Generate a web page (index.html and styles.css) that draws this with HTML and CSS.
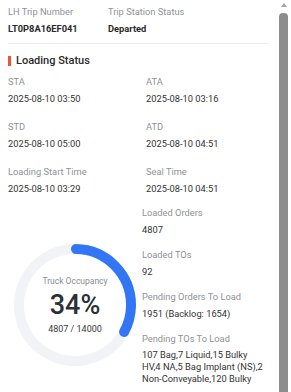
FILE: index.html
```html
<!DOCTYPE html>
<html>
<head>
<meta charset="utf-8">
<link rel="stylesheet" href="styles.css">
</head>
<body>
<div class="page">
  <div class="content">
    <div class="head-grid">
      <div class="field">
        <div class="label">LH Trip Number</div>
        <div class="value strong">LT0P8A16EF041</div>
      </div>
      <div class="field">
        <div class="label">Trip Station Status</div>
        <div class="value strong">Departed</div>
      </div>
    </div>
    <div class="divider"></div>
    <div class="section-title"><span class="mark"></span>Loading Status</div>
    <div class="time-grid">
      <div class="field"><div class="label">STA</div><div class="value">2025-08-10 03:50</div></div>
      <div class="field"><div class="label">ATA</div><div class="value">2025-08-10 03:16</div></div>
      <div class="field"><div class="label">STD</div><div class="value">2025-08-10 05:00</div></div>
      <div class="field"><div class="label">ATD</div><div class="value">2025-08-10 04:51</div></div>
      <div class="field"><div class="label">Loading Start Time</div><div class="value">2025-08-10 03:29</div></div>
      <div class="field"><div class="label">Seal Time</div><div class="value">2025-08-10 04:51</div></div>
    </div>
    <div class="lower">
      <div class="gauge-col">
        <div class="gauge">
          <svg width="122" height="122" viewBox="0 0 122 122">
            <circle class="track" cx="61" cy="61" r="56" stroke-dasharray="237 400" transform="rotate(34 61 61)"></circle>
            <circle class="bar" cx="61" cy="61" r="56" stroke-dasharray="115 400" transform="rotate(-89 61 61)"></circle>
          </svg>
          <div class="gauge-text">
            <div class="g-label">Truck Occupancy</div>
            <div class="g-pct">34%</div>
            <div class="g-count">4807 / 14000</div>
          </div>
        </div>
      </div>
      <div class="list">
        <div class="field"><div class="label">Loaded Orders</div><div class="value">4807</div></div>
        <div class="field"><div class="label">Loaded TOs</div><div class="value">92</div></div>
        <div class="field"><div class="label">Pending Orders To Load</div><div class="value">1951 (Backlog: 1654)</div></div>
        <div class="field"><div class="label">Pending TOs To Load</div><div class="value multi">107 Bag,7 Liquid,15 Bulky<br>HV,4 NA,5 Bag Implant (NS),2<br>Non-Conveyable,120 Bulky</div></div>
      </div>
    </div>
  </div>
  <div class="scrollbar">
    <div class="arrow"></div>
    <div class="thumb"></div>
  </div>
</div>
</body>
</html>
```
FILE: styles.css
```css
html, body {
  margin: 0;
  padding: 0;
  background: #ffffff;
}
body {
  font-family: Roboto, "Liberation Sans", sans-serif;
  font-size: 9.3px;
  color: #333333;
  height: 392px;
  overflow: hidden;
}
.page {
  display: flex;
  height: 392px;
}
.content {
  flex: 1;
  padding: 5px 8px 0 8px;
  min-width: 0;
}
.label {
  color: #8f9298;
  line-height: 14px;
}
.value {
  color: #333333;
  line-height: 14px;
  margin-top: 3px;
}
.value.strong {
  font-weight: 700;
  color: #2a2a2a;
}
.head-grid {
  display: grid;
  grid-template-columns: 100px 1fr;
}
.divider {
  height: 1px;
  background: #e9eaec;
  margin-top: 7px;
}
.section-title {
  display: flex;
  align-items: center;
  gap: 5px;
  margin-top: 9px;
  font-size: 11px;
  line-height: 16px;
  font-weight: 500;
  color: #2b2b2b;
}
.mark {
  width: 3px;
  height: 10px;
  background: #f0532d;
}
.time-grid {
  display: grid;
  grid-template-columns: 138px 1fr;
  row-gap: 14px;
  margin-top: 6px;
}
.lower {
  display: flex;
  margin-top: 10px;
}
.gauge-col {
  width: 134px;
  flex: none;
  display: flex;
  justify-content: center;
  padding-top: 38px;
  margin-left: -8px;
  padding-left: 8px;
}
.gauge {
  position: relative;
  width: 122px;
  height: 122px;
}
.gauge svg {
  display: block;
}
.track {
  fill: none;
  stroke: #f2f3f7;
  stroke-width: 10;
}
.bar {
  fill: none;
  stroke: #3275f5;
  stroke-width: 10;
  stroke-linecap: round;
}
.gauge-text {
  position: absolute;
  inset: 0;
  display: flex;
  flex-direction: column;
  align-items: center;
  justify-content: center;
}
.g-label {
  font-size: 8.5px;
  line-height: 12px;
  color: #8a8d93;
}
.g-pct {
  font-size: 27px;
  line-height: 30px;
  font-weight: 500;
  color: #2b2f36;
  margin-top: 3px;
}
.g-count {
  font-size: 9px;
  line-height: 12px;
  color: #3a3a3a;
  margin-top: 3px;
}
.list {
  flex: 1;
  display: flex;
  flex-direction: column;
  gap: 11px;
}
.value.multi {
  line-height: 12px;
  white-space: nowrap;
}
.scrollbar {
  width: 15px;
  flex: none;
  display: flex;
  flex-direction: column;
  align-items: center;
  background: #ffffff;
}
.arrow {
  margin-top: 3px;
  width: 0;
  height: 0;
  border-left: 3.5px solid transparent;
  border-right: 3.5px solid transparent;
  border-bottom: 4px solid #a3a3a3;
}
.thumb {
  margin-top: 6px;
  width: 9px;
  flex: 1;
  background: #8d8d8d;
  border-radius: 4px 4px 0 0;
}
```
